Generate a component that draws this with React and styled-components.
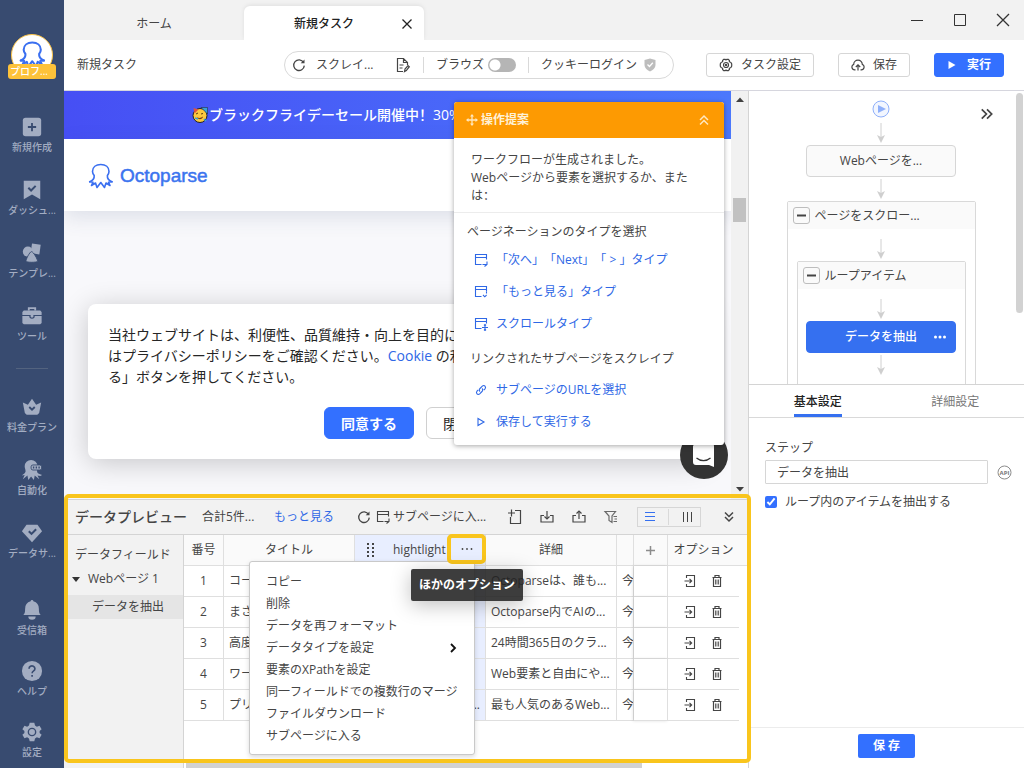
import React from 'react';
import styled, { createGlobalStyle, css } from 'styled-components';

const GlobalStyle = createGlobalStyle`
  * {
    box-sizing: border-box;
  }

  body {
    margin: 0;
    font-family: "Open Sans", "Noto Sans CJK SC", sans-serif;
    font-size: 12px;
    line-height: 18px;
    text-spacing-trim: space-all;
    color: #454545;
    background-color: white;
  }

  button, input {
    font: inherit;
    color: inherit;
  }

  button {
    padding: 0;
    border: none;
    background: none;
    cursor: pointer;
    white-space: nowrap;
  }

  a {
    color: #2f68e6;
    text-decoration: none;
  }

  svg {
    display: block;
    flex-shrink: 0;
  }
`;

/* ---------- icons ---------- */

const Line = ({ size = 16, box = 16, width = 1, children, ...rest }) => (
  <svg
    width={size}
    height={size}
    viewBox={`0 0 ${box} ${box}`}
    fill="none"
    stroke="currentColor"
    strokeWidth={width}
    {...rest}
  >
    {children}
  </svg>
);

const Octopus = ({ size, stroke = '#3a6ff0', width = 2 }) => (
  <Line size={size} box={26} width={width} stroke={stroke} strokeLinejoin="round" strokeLinecap="round">
    <path d="M1.700 18.800c3-1.300 4.800-3.300 4.500-6.300C5 11 4.500 9.500 4.500 8.500 4.500 4 8 1.500 12.800 1.500S21 4 21 8.500c0 1-.5 2.500-1.600 4-.3 3 1.500 5 4.600 6.300" />
    <path d="M1.700 18.800l3.300.4-1.500 3.300 4-2.500 1.500 4.500 3.800-5 3.700 5L18 20l4 2.500-1.500-3.300 3.500-.4" />
  </Line>
);

const RefreshIcon = () => (
  <Line size={14} box={14} width={1.3}>
    <path d="M11.600 4.500A5.300 5.300 0 1 0 12.300 7.600" />
    <path d="M12.500 1.500v3.800H8.700z" fill="currentColor" stroke="none" />
  </Line>
);

const DocEditIcon = () => (
  <Line size={16} width={1.2}>
    <path d="M8 14.500H2.500v-13h6l4 4v2.500M8.500 1.500v4h4M4.500 8h4M4.500 11h3" />
    <path d="M9.500 14.500l.5-2.500 3-3.500 1.300 1.200-3 3.800z" />
  </Line>
);

const ShieldIcon = () => (
  <svg width="14" height="14" viewBox="0 0 14 14">
    <path d="M7 .5l5.500 1.500v5c0 3-2.300 5-5.500 6.500C3.800 12 1.500 10 1.500 7V2z" fill="#bdbdbd" />
    <path d="M4.500 6.500L6.500 8.500 9.800 4.800" fill="none" stroke="white" strokeWidth="1.300" />
  </svg>
);

const GearOutline = () => (
  <Line size={14} box={14} width={1.200}>
    <path d="M4.700 1.300h1.500l.8.700.8-.7h1.500l1.100 1.200v1.200l1.600.9.700 1.400v2l-.7 1.400-1.600.9v1.200l-1.100 1.200H7.800L7 12l-.8.700H4.700L3.600 11.500v-1.200L2 9.400 1.300 8V6L2 4.600l1.600-.9V2.500z" />
    <circle cx="7" cy="7" r="2.500" />
    <circle cx="7" cy="7" r=".6" />
  </Line>
);

const CloudUp = () => (
  <Line size={14} box={14} width={1.200}>
    <path d="M4.500 11.800H3.800A2.800 2.800 0 0 1 2.700 6.400 4.300 4.300 0 0 1 11.300 6.400a2.800 2.800 0 0 1-1.100 5.400H9.500" />
    <path d="M7 12.500V7M4.800 9L7 6.800 9.200 9" />
  </Line>
);

const PlaySolid = () => (
  <svg width="10" height="10" viewBox="0 0 10 10"><path d="M1.500 1l7 4-7 4z" fill="currentColor" /></svg>
);

// browser window outline with a small action glyph in the corner
const PageIcon = ({ kind }) => (
  <Line size={14} box={14} width={1.100}>
    <path d="M7.500 11.500h-6v-10h11v5M1.500 4.500h11" />
    {kind === 'next' && <path d="M8.500 11.500h4.500M10.500 13.500l2.500-2V8.500" />}
    {kind === 'more' && <path d="M12.500 6.500v2M9 10l1.800 1.800L12.600 10" />}
    {kind === 'scroll' && <path d="M11 7.500v6M8 10.500h6M10 8.500l1-1 1 1M10 12.500l1 1 1-1" />}
  </Line>
);

const LinkIcon = () => (
  <Line size={12} box={12} width={1.100}>
    <path d="M5 7.500c-1-1-.9-2.200 0-3L7.300 2.200c1-.9 2-.8 2.700 0s.8 1.700 0 2.600L8.700 6" />
    <path d="M7 4.500c1 1 .9 2.200 0 3L4.700 9.800c-1 .9-2 .8-2.700 0s-.8-1.700 0-2.600L3.300 6" />
  </Line>
);

const PlayOutline = () => (
  <Line size={12} box={12} width={1.100}><path d="M3 2.500v7L9 6z" /></Line>
);

const MoveIcon = () => (
  <Line size={12} box={12} width={1.300}>
    <path d="M6 1v10M1 6h10" />
    <path d="M6 0l2 2.500H4zM6 12l2-2.500H4zM0 6l2.500-2v4zM12 6l-2.500-2v4z" fill="currentColor" stroke="none" />
  </Line>
);

const DoubleChevron = ({ turn = 0, size = 12 }) => (
  <Line size={size} box={12} width={1.500} transform={`rotate(${turn})`}>
    <path d="M2 1.500l4 4 4-4M2 6l4 4 4-4" />
  </Line>
);

const AddPageIcon = () => (
  <Line width={1.200}>
    <path d="M8 1.500h5.500v13h-10V8M4.500.5v7M1 4h7" />
  </Line>
);

const TrayIcon = ({ up }) => (
  <Line width={1.200}>
    <path d="M5 6.500H2v6.500h12V6.500h-3M8 2v8" />
    <path d={up ? 'M5.500 4.500L8 2l2.500 2.500' : 'M5.500 7.500L8 10l2.500-2.500'} />
  </Line>
);

const FilterIcon = () => (
  <Line width={1.200} color="#6a6a6a">
    <path d="M2 2.500h10.500L9 7v6.500L6 11.500V7zM10.500 7.500H14M11.500 10H14M10.500 12.500H14" />
  </Line>
);

const EnterIcon = () => (
  <Line size={14} box={14} width={1.100}>
    <path d="M3.500 4V1.500h8v11h-8V10M1.500 7h7M6.500 4.800L8.700 7 6.500 9.200" />
  </Line>
);

const TrashIcon = () => (
  <Line size={14} box={14} width={1.200}>
    <path d="M2.500 3.500h9M5 3.500v-2h4v2M3.500 3.500v9h7v-9M5.800 5.500v5M8.200 5.500v5" />
  </Line>
);

const sideIcons = {
  add: (
    <>
      <rect x="1" y="1" width="20" height="20" rx="3" />
      <path d="M11 6.500v9M6.500 11h9" stroke="#384b70" strokeWidth="2" />
    </>
  ),
  dashboard: (
    <>
      <path d="M2 1h18v20l-9-5-9 5z" />
      <path d="M7 8.500l3 3 5-5" fill="none" stroke="#384b70" strokeWidth="2.200" />
    </>
  ),
  template: (
    <>
      <circle cx="6.500" cy="9.500" r="5.500" />
      <path d="M11 .500l9.500 1.500-1.500 10.500-9.500-1.500z" />
      <path d="M10.500 9.500c2 0 7 9 6.500 10.500s-12 1.500-12.500 0S8.500 9.500 10.500 9.500z" stroke="#384b70" />
    </>
  ),
  tool: (
    <>
      <path d="M6.500 5V1.500h9V5h-2V3.300h-5V5z" />
      <path d="M2 5h18l1.500 1.500V10H.500V6.500zM.500 11h7.500a3 3 0 0 0 6 0h7.500v7.500L20 20H2L.500 18.500z" />
      <path d="M9.500 10h3v2l-1.500 1-1.500-1z" />
    </>
  ),
  crown: (
    <>
      <path d="M1 6l5.500 2.500L11 2l4.500 6.500L21 6l-2.200 11.500-2 2H5.200l-2-2z" />
      <path d="M8 11l3 3 3-3" fill="none" stroke="#384b70" strokeWidth="2" />
    </>
  ),
  auto: (
    <>
      <path d="M10 0a7 7 0 0 1 7 7c0 4-1 5 0 7 1 1.500 3 1.500 5 2.500l-2 1-3-.500 2 4-5-4-1 5-3-4-3 4-1-5-5 4 2-4.500-3 .500C1.500 15 3.500 15 4 12.500 4 10.500 3 9 3 7a7 7 0 0 1 7-7z" />
      <rect x="10" y="5.500" width="11.500" height="5.500" rx="2" stroke="#384b70" />
      <path d="M12 8.300h1.500M15 8.300h1.500M18 8.300h1.500" stroke="#384b70" strokeWidth="2" />
    </>
  ),
  data: (
    <>
      <path d="M5 2h12l5 7-11 12L0 9z" />
      <path d="M7.500 9l3 3 5-5" fill="none" stroke="#384b70" strokeWidth="2.200" />
    </>
  ),
  bell: (
    <>
      <path d="M9.500 1.500a1.500 1.500 0 0 1 3 0c4 1 6 4 6 8 0 4 .500 5 2 7h-19c1.500-2 2-3 2-7 0-4 2-7 6-8z" />
      <path d="M7 18h8a4 3.500 0 0 1-8 0z" />
    </>
  ),
  help: (
    <>
      <circle cx="11" cy="11" r="11" />
      <path d="M7.800 8.500a3.200 3 0 1 1 5 2.400c-1.200.8-1.700 1.300-1.700 2.600M11.100 15.300v2" fill="none" stroke="#384b70" strokeWidth="1.800" />
    </>
  ),
  settings: (
    <>
      <path d="M8.500 1h5l.8 3 2 1.200 2.900-1L21.500 8l-2.200 2v2l2.200 2-2.300 3.800-2.900-1-2 1.200-.8 3h-5l-.8-3-2-1.200-2.900 1L.500 14l2.200-2v-2L.500 8l2.300-3.800 2.900 1 2-1.200z" />
      <circle cx="11" cy="11" r="4" fill="none" stroke="#384b70" strokeWidth="1.500" />
    </>
  ),
};

/* ---------- shell ---------- */

const Shell = styled.div`
  display: flex;
  height: 100vh;
  overflow: hidden;
`;

const Main = styled.main`
  flex: 1;
  min-width: 0;
  display: flex;
  flex-direction: column;
`;

const Sidebar = styled.nav`
  width: 64px;
  flex-shrink: 0;
  display: flex;
  flex-direction: column;
  align-items: center;
  padding: 34px 0 8px;
  color: #a3adc2;
  background-color: #384b70;
`;

const Profile = styled.button`
  width: 48px;
  height: 46px;
  margin-bottom: 36px;
  display: flex;
  flex-direction: column;
  align-items: center;
`;

const Avatar = styled.span`
  width: 42px;
  height: 42px;
  flex-shrink: 0;
  display: flex;
  justify-content: center;
  padding-top: 6px;
  border: 1px solid #fbc44a;
  border-radius: 50%;
  background-color: white;
`;

const ProfileName = styled.span`
  width: 48px;
  height: 15px;
  flex-shrink: 0;
  margin-top: -12px;
  padding-right: 6px;
  font-size: 10px;
  line-height: 15px;
  font-weight: 500;
  color: white;
  background-color: #fdc23a;
  border-radius: 3px;
  z-index: 1;
`;

const SideGroup = styled.div`
  width: 100%;
  display: flex;
  flex-direction: column;
  gap: ${({ $gap }) => $gap || 24}px;
  ${({ $bottom }) => $bottom && 'margin-top: auto;'}
`;

const SideItem = styled.button`
  display: flex;
  flex-direction: column;
  align-items: center;
  gap: 1px;
  font-size: 10px;
  line-height: 16px;
  font-weight: 500;
`;

const SideRule = styled.hr`
  width: 32px;
  height: 1px;
  margin: 24px 0 27px;
  border: none;
  background-color: #53637f;
`;

const TitleBar = styled.header`
  height: 40px;
  flex-shrink: 0;
  display: flex;
  align-items: flex-end;
  background-color: #f2f2f2;
`;

const Tab = styled.div`
  width: 180px;
  height: ${({ $active }) => ($active ? 34 : 40)}px;
  display: flex;
  align-items: center;
  justify-content: ${({ $active }) => ($active ? 'space-between' : 'center')};
  ${({ $active }) => $active && css`
    padding: 2px 11px 0 50px;
    font-weight: 500;
    color: #222;
    background-color: white;
    border-radius: 6px 6px 0 0;
    box-shadow: 0 -1px 4px rgba(0, 0, 0, 0.08);
  `}
`;

const TabLabel = styled.button`
  padding-top: ${({ $inset }) => ($inset ? 0 : 8)}px;
`;

const WindowControls = styled.div`
  margin-left: auto;
  align-self: stretch;
  display: flex;
`;

const WindowButton = styled.button`
  width: 43px;
  display: flex;
  align-items: center;
  justify-content: center;
  color: #333;
`;

const Toolbar = styled.div`
  height: 51px;
  flex-shrink: 0;
  display: flex;
  align-items: center;
  padding: 0 20px 0 13px;
  background-color: white;
  border-bottom: 1px solid #d6d6de;
`;

const TaskName = styled.h1`
  flex: 0 1 207px;
  margin: 0;
  font-size: 12px;
  font-weight: normal;
  white-space: nowrap;
`;

const Pill = styled.div`
  height: 28px;
  display: flex;
  align-items: center;
  gap: 12px;
  padding: 0 16px 0 7px;
  border: 1px solid #d9d9d9;
  border-radius: 14px;
  white-space: nowrap;
`;

const PillField = styled.div`
  width: 119px;
  display: flex;
  align-items: center;
  justify-content: space-between;
`;

const PillGroup = styled.div`
  display: flex;
  align-items: center;
  gap: ${({ $gap }) => $gap || 10}px;
`;

const PillRule = styled.span`
  width: 1px;
  height: 16px;
  background-color: #d9d9d9;
`;

const Switch = styled.input`
  appearance: none;
  width: 28px;
  height: 14px;
  margin: 0;
  border-radius: 7px;
  background: radial-gradient(circle at 7px 7px, white 5px, #b5b5b5 6px);
`;

const ToolbarActions = styled.div`
  margin-left: auto;
  display: flex;
  gap: 24px;
`;

const ActionButton = styled.button`
  height: 24px;
  min-width: 70px;
  display: flex;
  align-items: center;
  justify-content: center;
  gap: 8px;
  padding: 0 12px;
  border: 1px solid #d6d6d6;
  border-radius: 3px;
  ${({ $primary }) => $primary && css`
    gap: 10px;
    color: white;
    font-weight: bold;
    background-color: #3370ff;
    border-color: #3370ff;
  `}
`;

const Workspace = styled.div`
  flex: 1;
  min-height: 0;
  display: flex;
`;

const LeftPane = styled.section`
  flex: 1;
  min-width: 0;
  position: relative;
  display: flex;
  flex-direction: column;
`;

/* ---------- embedded browser ---------- */

const Browser = styled.div`
  flex: 1;
  min-height: 0;
  display: flex;
  overflow: hidden;
`;

const Site = styled.div`
  flex: 1;
  min-width: 0;
  display: flex;
  flex-direction: column;
  background-color: #f8f8fb;
`;

const Banner = styled.div`
  height: 48px;
  flex-shrink: 0;
  display: flex;
  align-items: center;
  gap: 1px;
  padding-left: 128px;
  font-size: 14px;
  color: white;
  white-space: nowrap;
  font-weight: 500;
  overflow: hidden;
  background: linear-gradient(90deg, #464ff4, #4b78fc);
`;

const SiteHeader = styled.div`
  height: 72px;
  flex-shrink: 0;
  display: flex;
  align-items: center;
  gap: 6px;
  padding: 2px 0 0 24px;
  background-color: white;
  box-shadow: 0 6px 20px rgba(60, 80, 120, 0.14);
`;

const Brand = styled.span`
  font-family: "Liberation Sans", sans-serif;
  font-size: 19px;
  color: #3b74ef;
  -webkit-text-stroke: 0.5px #3b74ef;
`;

const CookieCard = styled.div`
  margin: 93px 24px 0;
  padding: 20px;
  font-size: 14px;
  line-height: 21px;
  color: #262626;
  white-space: nowrap;
  background-color: white;
  border-radius: 8px;
  box-shadow: 0 4px 28px rgba(0, 0, 0, 0.2);
`;

const CookieText = styled.p`
  margin: 0 0 20px;
`;

const CookieButtons = styled.div`
  display: flex;
  gap: 12px;
  padding-left: 216px;
`;

const CookieButton = styled.button`
  height: 32px;
  padding: 0 16px;
  border: 1px solid #d0d0d0;
  border-radius: 6px;
  ${({ $primary }) => $primary && css`
    color: white;
    font-weight: bold;
    background-color: #3370ff;
    border-color: #3370ff;
  `}
`;

const ScrollTrack = styled.div`
  width: 17px;
  flex-shrink: 0;
  display: flex;
  flex-direction: column;
  align-items: center;
  padding: 6px 0 7px;
  background-color: #f1f1f1;
`;

const ScrollThumb = styled.div`
  width: 13px;
  height: 24px;
  margin: 96px 0 auto;
  background-color: #c1c1c1;
`;

const ScrollArrow = ({ down }) => (
  <svg width="8" height="5" viewBox="0 0 8 5">
    <path d={down ? 'M0 0h8L4 4.500z' : 'M0 5h8L4 .500z'} fill="#404040" />
  </svg>
);

const ChatBubble = styled.button`
  position: absolute;
  right: 20px;
  top: 340px;
  width: 48px;
  height: 48px;
  display: flex;
  align-items: center;
  justify-content: center;
  border-radius: 50%;
  background-color: #333;
`;

/* ---------- tips popup ---------- */

const Tips = styled.aside`
  position: absolute;
  top: 11px;
  right: 24px;
  width: 270px;
  padding-bottom: 7px;
  background-color: white;
  border-radius: 3px;
  box-shadow: 0 1px 5px rgba(0, 0, 0, 0.35);
`;

const TipsHeader = styled.div`
  height: 36px;
  display: flex;
  align-items: center;
  gap: 3px;
  padding: 0 14px 0 12px;
  color: #ffe8c0;
  background-color: #fd9a02;
  border-radius: 3px 3px 0 0;
`;

const TipsTitle = styled.h2`
  flex: 1;
  margin: 0;
  font-size: 12px;
  font-weight: bold;
  color: #fff1d6;
`;

const TipsMessage = styled.p`
  margin: 0 0 7px;
  padding: 13px 36px 7px 17px;
  border-bottom: 1px solid #ececec;
`;

const TipsHeading = styled.h3`
  margin: 0;
  padding: ${({ $second }) => ($second ? '4px 0 0 16px' : '0 0 0 13px')};
  font-size: 12px;
  font-weight: normal;
  line-height: ${({ $second }) => ($second ? 30 : 24)}px;
`;

const TipsLink = styled.a`
  height: 32px;
  display: grid;
  grid-template-columns: 14px auto;
  align-items: center;
  justify-items: center;
  justify-content: start;
  gap: 8px;
  padding-left: 20px;
`;

/* ---------- data preview ---------- */

const DataPreview = styled.section`
  position: relative;
  flex-shrink: 0;
  display: flex;
  flex-direction: column;
  border-top: 1px solid #d4d4d4;
`;

const Frame = styled.div`
  position: absolute;
  top: -6px;
  right: -3px;
  bottom: 5px;
  left: 0;
  border: 4px solid #f9c51d;
  border-radius: 5px;
  pointer-events: none;
  z-index: 3;
`;

const PreviewBar = styled.div`
  height: 35px;
  display: flex;
  align-items: center;
  padding: 0 13px 0 11px;
  white-space: nowrap;
  background-color: #f2f2f2;
  border-bottom: 1px solid #d4d4d4;
`;

const PreviewTitle = styled.h2`
  margin: 0 15px 0 0;
  font-size: 14px;
  font-weight: 500;
`;

const PreviewCount = styled.span`
  flex: 0 0 72px;
`;

const SubpageButton = styled.button`
  display: flex;
  align-items: center;
  gap: 3px;
`;

const PreviewTools = styled.div`
  margin-left: auto;
  display: flex;
  align-items: center;
  gap: 16px;
`;

const IconButton = styled.button`
  display: flex;
`;

const RefreshButton = styled(IconButton)`
  margin: 0 5px 0 23px;
`;

const Segmented = styled.div`
  width: 64px;
  height: 20px;
  display: flex;
  align-items: center;
  justify-content: space-around;
  margin: 0 6px 0 2px;
  border: 1px solid #d6d6d6;
`;

const PreviewBody = styled.div`
  display: flex;
  background-color: white;
`;

const Tree = styled.div`
  width: 120px;
  flex-shrink: 0;
  padding-top: 8px;
  line-height: 24px;
  background-color: #f2f2f2;
  border-right: 1px solid #d4d4d4;
`;

const TreeHeading = styled.div`
  padding-left: 11px;
`;

const TreeNode = styled.button`
  width: 100%;
  height: 24px;
  display: flex;
  align-items: center;
  gap: 8px;
  padding-left: ${({ $level }) => ($level === 2 ? 28 : 8)}px;
  ${({ $selected }) => $selected && css`
    margin-top: 4px;
    background-color: #e5e5e5;
  `}
`;

const TableArea = styled.div`
  flex: 1;
  min-width: 0;
  display: flex;
  flex-direction: column;
  overflow: hidden;
`;

const Table = styled.table`
  width: 100%;
  table-layout: fixed;
  border-collapse: separate;
  border-spacing: 0;
`;

const cell = css`
  height: 31px;
  padding: 0 5px;
  overflow: hidden;
  white-space: nowrap;
  border-right: 1px solid #dfdfdf;
  border-bottom: 1px solid #dfdfdf;

  &:last-child {
    border-right: none;
  }
`;

const Th = styled.th`
  ${cell}
  font-weight: ${({ $on }) => ($on ? 500 : 'normal')};
  background-color: ${({ $on }) => ($on ? '#e8eeff' : '#fafafa')};
  ${({ $open }) => $open && 'border-right: none;'}
`;

const Td = styled.td`
  ${cell}
  text-align: ${({ $align }) => $align || 'left'};
  background-color: ${({ $on }) => ($on ? '#e8eeff' : 'white')};
  ${({ $sticky }) => $sticky && 'box-shadow: -1px 0 3px rgba(0, 0, 0, 0.12);'}
  ${({ $open }) => $open && 'border-right: none;'}
  ${({ $blank }) => $blank && 'border-bottom: none;'}
`;

const FieldHead = styled.div`
  display: flex;
  align-items: center;
  gap: 18px;
  padding-left: 7px;
`;

const RowActions = styled.div`
  display: flex;
  justify-content: center;
  gap: 13px;
`;

const HScroll = styled.div`
  width: 456px;
  height: 5px;
  margin: 42px 0 0 2px;
  background-color: #d2d2d2;
`;

const FieldMenu = styled.ul`
  position: absolute;
  top: 61px;
  left: 185px;
  width: 226px;
  margin: 0;
  padding: 9px 15px 7px 16px;
  list-style: none;
  background-color: white;
  border: 1px solid #c9c9c9;
  border-radius: 3px;
  box-shadow: 0 2px 5px rgba(0, 0, 0, 0.15);
  z-index: 1;
`;

const MenuItem = styled.button`
  width: 100%;
  height: 22px;
  display: flex;
  align-items: center;
  justify-content: space-between;
`;

const MoreButton = styled.button`
  position: absolute;
  top: 34px;
  left: 383px;
  width: 39px;
  height: 30px;
  display: flex;
  align-items: center;
  justify-content: center;
  background-color: #e8eeff;
  border: 4px solid #f9c51d;
  border-radius: 5px;
  z-index: 2;
`;

const Tooltip = styled.div`
  position: absolute;
  top: 69px;
  left: 347px;
  padding: 7px 8px;
  font-weight: bold;
  color: white;
  white-space: nowrap;
  background-color: rgba(34, 34, 34, 0.88);
  border-radius: 2px;
  box-shadow: 0 4px 20px rgba(0, 0, 0, 0.25);
  z-index: 2;
`;

/* ---------- workflow and step settings ---------- */

const RightPane = styled.section`
  width: 276px;
  flex-shrink: 0;
  display: flex;
  flex-direction: column;
  background-color: white;
  border-left: 1px solid #d4d4d4;
`;

const Canvas = styled.div`
  position: relative;
  height: 294px;
  flex-shrink: 0;
  display: flex;
  flex-direction: column;
  align-items: center;
  padding: 8px 11px 0 0;
  overflow: hidden;
  border-bottom: 1px solid #d4d4d4;
`;

const Start = styled.div`
  flex-shrink: 0;
  margin-bottom: 2px;
`;

const CanvasScroll = styled.div`
  position: absolute;
  top: 2px;
  right: 1px;
  width: 7px;
  height: 220px;
  background-color: #d2d2d2;
  border-radius: 4px;
`;

const Collapse = styled.button`
  position: absolute;
  top: 16px;
  right: 30px;
`;

const Step = styled.button`
  width: 150px;
  height: 32px;
  flex-shrink: 0;
  display: flex;
  align-items: center;
  justify-content: center;
  background-color: #fafafa;
  border: 1px solid #d6d6d6;
  border-radius: 4px;
  ${({ $active }) => $active && css`
    gap: 16px;
    padding-left: 30px;
    color: white;
    font-weight: 500;
    background-color: #3570f0;
    border-color: #3570f0;
  `}
`;

const Loop = styled.div`
  width: ${({ $inner }) => ($inner ? 169 : 189)}px;
  flex-shrink: 0;
  display: flex;
  flex-direction: column;
  align-items: center;
  padding-bottom: 40px;
  border: 1px solid #d9d9d9;
  border-radius: 2px;
`;

const LoopHeader = styled.div`
  width: 100%;
  height: 27px;
  display: flex;
  align-items: center;
  gap: 5px;
  margin-bottom: 8px;
  padding-left: 5px;
  background-color: #fafafa;
`;

const Toggle = styled.button`
  width: 17px;
  height: 17px;
  display: flex;
  align-items: center;
  justify-content: center;
  border: 1px solid #bdbdbd;
  border-radius: 3px;
`;

const Tabs = styled.div`
  display: grid;
  grid-template-columns: 1fr 1fr;
  justify-items: center;
  border-bottom: 1px solid #d9d9d9;
`;

const SettingTab = styled.button`
  height: 32px;
  color: ${({ $active }) => ($active ? '#222' : '#777')};
  font-weight: ${({ $active }) => ($active ? 500 : 'normal')};
  border-top: 4px solid transparent;
  border-bottom: 3px solid ${({ $active }) => ($active ? '#3570f0' : 'transparent')};
`;

const Form = styled.form`
  flex: 1;
  padding: 21px 12px 0 16px;
`;

const FieldRow = styled.div`
  display: flex;
  align-items: center;
  gap: 9px;
  margin: 3px 0 9px;
`;

const TextInput = styled.input`
  flex: 1;
  min-width: 0;
  height: 24px;
  padding: 0 11px;
  border: 1px solid #d6d6d6;
  border-radius: 1px;
  background-color: white;
`;

const CheckLabel = styled.label`
  display: flex;
  align-items: center;
  gap: 8px;
`;

const Checkbox = styled.input`
  width: 12px;
  height: 12px;
  margin: 0;
  accent-color: #3370ff;
`;

const PaneFooter = styled.div`
  display: flex;
  justify-content: center;
  padding: 6px 0 10px;
  border-top: 1px solid #ececec;
`;

const SaveButton = styled.button`
  width: 57px;
  height: 24px;
  color: white;
  font-weight: bold;
  background-color: #3370ff;
  border-radius: 2px;
`;

const Arrow = () => (
  <svg width="10" height="24" viewBox="0 0 10 24">
    <path d="M5 2v14" stroke="#d0d0d0" />
    <path d="M1 14l4 8 4-8-4 2z" fill="#cfcfcf" />
  </svg>
);

const Minus = () => <svg width="9" height="3" viewBox="0 0 9 3"><path d="M0 1.500h9" stroke="#444" strokeWidth="2" /></svg>;

const Dots = ({ r = 0.9 }) => (
  <svg width="14" height="6" viewBox="0 0 14 6" fill="currentColor">
    <circle cx="2.500" cy="3" r={r} />
    <circle cx="7" cy="3" r={r} />
    <circle cx="11.500" cy="3" r={r} />
  </svg>
);

const topItems = [
  ['add', '新規作成'],
  ['dashboard', 'ダッシュ...'],
  ['template', 'テンプレ...'],
  ['tool', 'ツール'],
];

const planItems = [
  ['crown', '料金プラン'],
  ['auto', '自動化'],
  ['data', 'データサ...'],
];

const bottomItems = [
  ['bell', '受信箱'],
  ['help', 'ヘルプ'],
  ['settings', '設定'],
];

const rows = [
  ['コード', '', 'Octoparseは、誰も...'],
  ['まさに', '', 'Octoparse内でAIの...'],
  ['高度な', '', '24時間365日のクラ...'],
  ['ワーク', '', 'Web要素と自由にや...'],
  ['プリセ', '...', '最も人気のあるWeb...'],
];

const menuItems = [
  'コピー',
  '削除',
  'データを再フォーマット',
  'データタイプを設定',
  '要素のXPathを設定',
  '同一フィールドでの複数行のマージ',
  'ファイルダウンロード',
  'サブページに入る',
];

const columnWidths = [40, 131, 131, 131, 17, 34, 71];

const SideItems = ({ items, gap, bottom }) => (
  <SideGroup $gap={gap} $bottom={bottom}>
    {items.map(([icon, label]) => (
      <SideItem key={icon}>
        <svg width="22" height="22" viewBox="-1 -1 24 24" fill="currentColor">{sideIcons[icon]}</svg>
        {label}
      </SideItem>
    ))}
  </SideGroup>
);

const TipsPanel = () => (
  <Tips>
    <TipsHeader>
      <MoveIcon />
      <TipsTitle>操作提案</TipsTitle>
      <IconButton aria-label="collapse"><DoubleChevron turn={180} /></IconButton>
    </TipsHeader>
    <TipsMessage>
      ワークフローが生成されました。<br />
      Webページから要素を選択するか、または：
    </TipsMessage>
    <TipsHeading>ページネーションのタイプを選択</TipsHeading>
    <TipsLink href="#next"><PageIcon kind="next" />「次へ」「Next」「 &gt; 」タイプ</TipsLink>
    <TipsLink href="#more"><PageIcon kind="more" />「もっと見る」タイプ</TipsLink>
    <TipsLink href="#scroll"><PageIcon kind="scroll" />スクロールタイプ</TipsLink>
    <TipsHeading $second>リンクされたサブページをスクレイプ</TipsHeading>
    <TipsLink href="#subpage"><LinkIcon />サブページのURLを選択</TipsLink>
    <TipsLink href="#run"><PlayOutline />保存して実行する</TipsLink>
  </Tips>
);

const SitePreview = () => (
  <Browser>
    <Site>
      <Banner>
        <svg width="16" height="16" viewBox="0 0 16 16">
          <circle cx="8" cy="8.500" r="7" fill="#fcc93e" stroke="#222" />
          <path d="M1.500 1l5 1.500-4 4z" fill="#e0533d" />
          <path d="M9 .500h6.500v6.500z" fill="#3aa0d8" stroke="#222" strokeWidth=".500" />
          <path d="M4 7l2-1M9 7l2-.500" stroke="#5b3a12" />
          <path d="M5 10c2 1.500 4 1 6-.500-.500 3-4.500 4-6 .500z" fill="#7a3b12" />
          <path d="M3 11l3 1M12 12l2 2" stroke="#3aa0d8" strokeWidth="1.500" />
        </svg>
        ブラックフライデーセール開催中！30%
      </Banner>
      <SiteHeader>
        <Octopus size={26} width={1.600} />
        <Brand>Octoparse</Brand>
      </SiteHeader>
      <CookieCard>
        <CookieText>
          当社ウェブサイトは、利便性、品質維持・向上を目的に<br />
          はプライバシーポリシーをご確認ください。<a href="#cookie">Cookie</a> の利<br />
          る」ボタンを押してください。
        </CookieText>
        <CookieButtons>
          <CookieButton $primary>同意する</CookieButton>
          <CookieButton>閉じる</CookieButton>
        </CookieButtons>
      </CookieCard>
    </Site>
    <ScrollTrack>
      <ScrollArrow />
      <ScrollThumb />
      <ScrollArrow down />
    </ScrollTrack>
  </Browser>
);

const PreviewTable = () => (
  <Table>
    <colgroup>
      {columnWidths.map((width, i) => <col key={i} width={width} />)}
      <col />
    </colgroup>
    <thead>
      <tr>
        <Th>番号</Th>
        <Th>タイトル</Th>
        <Th $on>
          <FieldHead>
            <svg width="8" height="16" viewBox="0 0 8 16" fill="#444">
              {[1, 5, 9, 13].map((y) => (
                <React.Fragment key={y}>
                  <rect x="0" y={y} width="2" height="2" />
                  <rect x="5" y={y} width="2" height="2" />
                </React.Fragment>
              ))}
            </svg>
            hightlight
          </FieldHead>
        </Th>
        <Th>詳細</Th>
        <Th />
        <Th>
          <svg width="9" height="9" viewBox="0 0 9 9" style={{ margin: 'auto' }}>
            <path d="M4.500 0v9M0 4.500h9" stroke="#8c8c8c" strokeWidth="1.500" />
          </svg>
        </Th>
        <Th $open>オプション</Th>
        <Th />
      </tr>
    </thead>
    <tbody>
      {rows.map(([title, highlight, detail], index) => (
        <tr key={title}>
          <Td $align="center">{index + 1}</Td>
          <Td>{title}</Td>
          <Td $on $align="right">{highlight}</Td>
          <Td>{detail}</Td>
          <Td>今</Td>
          <Td $sticky />
          <Td $open>
            <RowActions>
              <IconButton aria-label="enter"><EnterIcon /></IconButton>
              <IconButton aria-label="delete"><TrashIcon /></IconButton>
            </RowActions>
          </Td>
          <Td $blank />
        </tr>
      ))}
    </tbody>
  </Table>
);

const PreviewPanel = () => (
  <DataPreview>
    <PreviewBar>
      <PreviewTitle>データプレビュー</PreviewTitle>
      <PreviewCount>合計5件...</PreviewCount>
      <a href="#all">もっと見る</a>
      <RefreshButton aria-label="reload"><RefreshIcon /></RefreshButton>
      <SubpageButton><PageIcon kind="next" />サブページに入...</SubpageButton>
      <PreviewTools>
        <IconButton aria-label="add page"><AddPageIcon /></IconButton>
        <IconButton aria-label="import"><TrayIcon /></IconButton>
        <IconButton aria-label="export"><TrayIcon up /></IconButton>
        <IconButton aria-label="filter"><FilterIcon /></IconButton>
        <Segmented>
          <IconButton aria-label="rows"><Line size={12} box={12} color="#3570f0"><path d="M1 1.500h10M1 5.500h10M1 9.500h10" /></Line></IconButton>
          <PillRule />
          <IconButton aria-label="columns"><Line size={12} box={12}><path d="M1.500 1v10M5.500 1v10M9.500 1v10" /></Line></IconButton>
        </Segmented>
        <IconButton aria-label="fold"><DoubleChevron /></IconButton>
      </PreviewTools>
    </PreviewBar>
    <PreviewBody>
      <Tree>
        <TreeHeading>データフィールド</TreeHeading>
        <TreeNode>
          <svg width="8" height="5" viewBox="0 0 8 5"><path d="M0 0h8L4 5z" fill="#333" /></svg>
          Webページ 1
        </TreeNode>
        <TreeNode $level={2} $selected>データを抽出</TreeNode>
      </Tree>
      <TableArea>
        <PreviewTable />
        <HScroll />
      </TableArea>
    </PreviewBody>
    <FieldMenu>
      {menuItems.map((item) => (
        <li key={item}>
          <MenuItem>
            {item}
            {item === 'データタイプを設定' && (
              <svg width="12" height="12" viewBox="0 0 12 12"><path d="M4 2l4 4-4 4" fill="none" stroke="#111" strokeWidth="1.800" /></svg>
            )}
          </MenuItem>
        </li>
      ))}
    </FieldMenu>
    <MoreButton aria-label="more"><Dots /></MoreButton>
    <Tooltip>ほかのオプション</Tooltip>
    <Frame />
  </DataPreview>
);

const Workflow = () => (
  <Canvas>
    <Start>
      <svg width="20" height="20" viewBox="0 0 20 20">
        <circle cx="10" cy="10" r="8" fill="#f2f6ff" stroke="#8fb0fa" />
        <path d="M7 6l8 4-8 4z" fill="#8fb0fa" />
      </svg>
    </Start>
    <Arrow />
    <Step>Webページを...</Step>
    <Arrow />
    <Loop>
      <LoopHeader>
        <Toggle aria-label="fold"><Minus /></Toggle>
        ページをスクロー...
      </LoopHeader>
      <Arrow />
      <Loop $inner>
        <LoopHeader>
          <Toggle aria-label="fold"><Minus /></Toggle>
          ループアイテム
        </LoopHeader>
        <Arrow />
        <Step $active>データを抽出<Dots r={1.500} /></Step>
        <Arrow />
      </Loop>
    </Loop>
    <Collapse aria-label="collapse"><DoubleChevron turn={-90} size={14} /></Collapse>
    <CanvasScroll />
  </Canvas>
);

const StepSettings = () => (
  <>
    <Tabs>
      <SettingTab $active>基本設定</SettingTab>
      <SettingTab>詳細設定</SettingTab>
    </Tabs>
    <Form>
      <label htmlFor="step">ステップ</label>
      <FieldRow>
        <TextInput id="step" defaultValue="データを抽出" />
        <svg width="15" height="15" viewBox="0 0 15 15">
          <circle cx="7.500" cy="7.500" r="6.500" fill="none" stroke="#8c8c8c" />
          <text x="7.500" y="9.700" fontSize="6" fontWeight="bold" textAnchor="middle" fill="#777">API</text>
        </svg>
      </FieldRow>
      <CheckLabel>
        <Checkbox type="checkbox" defaultChecked />
        ループ内のアイテムを抽出する
      </CheckLabel>
    </Form>
    <PaneFooter><SaveButton>保 存</SaveButton></PaneFooter>
  </>
);

const App = () => {
  return (
    <Shell>
      <GlobalStyle />
      <Sidebar>
        <Profile>
          <Avatar><Octopus size={27} /></Avatar>
          <ProfileName>プロフ...</ProfileName>
        </Profile>
        <SideItems items={topItems} />
        <SideRule />
        <SideItems items={planItems} />
        <SideItems items={bottomItems} gap={22} bottom />
      </Sidebar>
      <Main>
        <TitleBar>
          <Tab><TabLabel>ホーム</TabLabel></Tab>
          <Tab $active>
            <TabLabel $inset>新規タスク</TabLabel>
            <IconButton aria-label="close tab"><Line size={12} box={12} width={1.300}><path d="M1.500 1.500l9 9M10.500 1.500l-9 9" /></Line></IconButton>
          </Tab>
          <WindowControls>
            <WindowButton aria-label="minimize"><Line><path d="M2 8.500h12" /></Line></WindowButton>
            <WindowButton aria-label="maximize"><Line><path d="M2.500 2.500h11v11h-11z" /></Line></WindowButton>
            <WindowButton aria-label="close"><Line width={1.300}><path d="M2 2l12 12M14 2L2 14" /></Line></WindowButton>
          </WindowControls>
        </TitleBar>
        <Toolbar>
          <TaskName>新規タスク</TaskName>
          <Pill>
            <PillField>
              <PillGroup><RefreshIcon />スクレイ...</PillGroup>
              <DocEditIcon />
            </PillField>
            <PillRule />
            <PillGroup as="label" $gap={4}>
              ブラウズ
              <Switch type="checkbox" role="switch" />
            </PillGroup>
            <PillRule />
            <PillGroup $gap={6}>クッキーログイン<ShieldIcon /></PillGroup>
          </Pill>
          <ToolbarActions>
            <ActionButton><GearOutline />タスク設定</ActionButton>
            <ActionButton><CloudUp />保存</ActionButton>
            <ActionButton $primary><PlaySolid />実行</ActionButton>
          </ToolbarActions>
        </Toolbar>
        <Workspace>
          <LeftPane>
            <SitePreview />
            <ChatBubble aria-label="chat">
              <svg width="24" height="26" viewBox="0 0 24 26">
                <path d="M3 1h16a3 3 0 0 1 3 3v21l-5-2H4a3 3 0 0 1-3-3V4z" fill="white" />
                <path d="M4.500 16c4 3.500 10 3.500 14 0" fill="none" stroke="#333" strokeWidth="1.200" />
              </svg>
            </ChatBubble>
            <TipsPanel />
            <PreviewPanel />
          </LeftPane>
          <RightPane>
            <Workflow />
            <StepSettings />
          </RightPane>
        </Workspace>
      </Main>
    </Shell>
  );
};

export default App;
